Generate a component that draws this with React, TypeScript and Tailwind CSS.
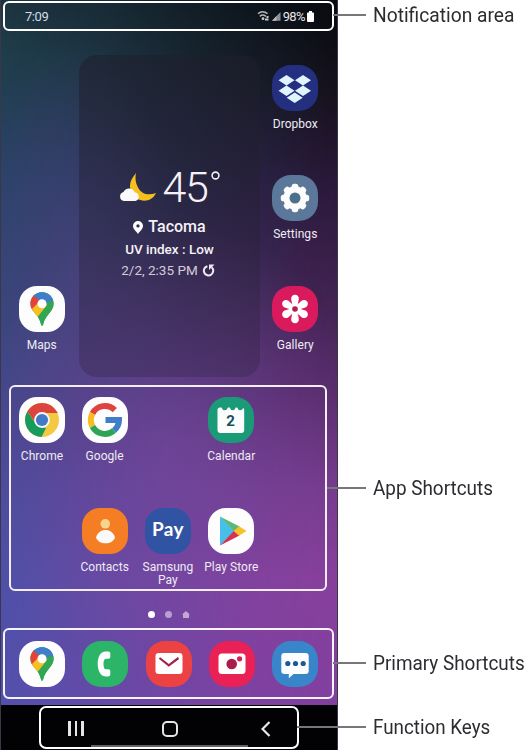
import React from "react";

type Kids = { children?: React.ReactNode };

const MapsIcon = () => (
  <svg viewBox="0 0 46 46" className="size-full">
    <rect width="46" height="46" rx="18" fill="#fdfdfe" />
    <clipPath id="pin">
      <path d="M23 6.3c-6.6 0-11.6 5-11.6 11.3 0 4 1.7 6.4 4.3 9.5 3 3.5 5.2 6.600 6.100 10.500.5 3 2 3 2.600 0 .9-3.900 3-7 6-10.600 2.600-3 4.200-5.600 4.200-9.500C34.600 11.300 29.600 6.300 23 6.300Z" />
    </clipPath>
    <g clipPath="url(#pin)">
      <rect width="46" height="46" fill="#31a653" />
      <path d="M8 3h30L23 18 14 10Z" fill="#4285cc" />
      <path d="M30 3 38 14 33 15 23 18 14 10 17 3Z" fill="#3f7fc8" />
      <path d="M14 9 23 17 12 27 6 18Z" fill="#e5423b" />
      <path d="M11.500 24.500 23 13 28 19 17 33Z" fill="#f8bf22" />
      <path d="M27 22 17 33 22 42 40 24V12l-5 2Z" fill="#31a653" />
    </g>
    <circle cx="23" cy="17.800" r="4.500" fill="#fff" />
  </svg>
);

const DropboxIcon = () => (
  <svg viewBox="0 0 46 46" className="size-full">
    <rect width="46" height="46" rx="19" fill="#24307f" />
    <path
      d="M14.500 10l8 5.200-8 5.200-8-5.200zM31 10l8 5.200-8 5.200-8-5.200zM14.500 20.500l8 5.200-8 5.200-8-5.200zM31 20.500l8 5.200-8 5.200-8-5.200zM22.700 27.600l8 5.200-8 5.200-8-5.200z"
      fill="#dff5fb"
    />
  </svg>
);

const SettingsIcon = () => (
  <svg viewBox="0 0 46 46" className="size-full">
    <rect width="46" height="46" rx="19" fill="#5b7799" />
    <g fill="#fcfcfd">
      {[0, 45, 90, 135].map((a) => (
        <rect key={a} x="19.700" y="8.800" width="6.600" height="28.400" rx="2.600" transform={`rotate(${a} 23 23)`} />
      ))}
      <circle cx="23" cy="23" r="11.700" />
    </g>
    <circle cx="23" cy="23" r="5.500" fill="#4b7089" />
  </svg>
);

const GalleryIcon = () => (
  <svg viewBox="0 0 46 46" className="size-full">
    <rect width="46" height="46" rx="19" fill="#d91b5e" />
    <g fill="#fff">
      {[0, 60, 120, 180, 240, 300].map((a) => (
        <path key={a} d="M20.700 20.500 19.200 13.200a3.850 3.850 0 1 1 7.600 0L25.300 20.500Z" transform={`rotate(${a} 23 23)`} />
      ))}
      <circle cx="23" cy="23" r="5" />
    </g>
    <circle cx="23" cy="23" r="2.800" fill="#b81a52" />
  </svg>
);

const ChromeIcon = () => (
  <svg viewBox="0 0 46 46" className="size-full">
    <rect width="46" height="46" rx="18" fill="#fdfdfe" />
    <circle cx="23" cy="23" r="17" fill="#f4c942" />
    <path d="M8.300 14.500A17 17 0 0 1 37.700 14.500L39 16H23l-6 10.500Z" fill="#dc453d" />
    <path d="M8.300 14.500 17 27l6 3.500 4 .500L22.500 40A17 17 0 0 1 8.300 14.500Z" fill="#169b5c" />
    <circle cx="23" cy="23" r="7.900" fill="#f6f8fc" />
    <circle cx="23" cy="23" r="6.100" fill="#427ac8" />
  </svg>
);

const GoogleIcon = () => (
  <svg viewBox="0 0 46 46" className="size-full">
    <rect width="46" height="46" rx="18" fill="#fdfdfe" />
    <g fill="none" strokeWidth="6">
      <path d="M10.500 16.500A14 14 0 0 1 32.800 13.100" stroke="#df433e" />
      <path d="M10.500 16.500a14 14 0 0 0 0 13" stroke="#f9bd20" />
      <path d="M10.500 29.500a14 14 0 0 0 21.500 4" stroke="#2fa456" />
      <path d="M32 33.500A14 14 0 0 0 37 23H23.500" stroke="#427dc7" />
    </g>
  </svg>
);

const CalendarIcon = () => (
  <svg viewBox="0 0 46 46" className="size-full">
    <rect width="46" height="46" rx="19" fill="#1a9a77" />
    <path
      d="M9.500 13q0-2.500 2.500-2.500h1.500q1 2.800 3.200 2.800t3.200-2.800h1.800q1 2.800 3 2.800t3-2.800h1.500q1 2.800 3 2.800t3-2.300q1 .500 1 2v20q0 3-3 3H12.500q-3 0-3-3Z"
      fill="#fbfdfd"
    />
    <text x="22.500" y="29" textAnchor="middle" fill="#15505f" fontSize="15" fontWeight="700" fontFamily="Roboto, sans-serif">
      2
    </text>
  </svg>
);

const ContactsIcon = () => (
  <svg viewBox="0 0 46 46" className="size-full">
    <rect width="46" height="46" rx="18" fill="#f57e25" />
    <circle cx="23.300" cy="15.800" r="4.800" fill="#f7d68b" />
    <path d="M14 29.500c1.500-5 5-7.500 9.500-7.500s8 2.500 9.500 7.500c-1.500 4-5 5.800-9.500 5.800s-8-1.800-9.500-5.800Z" fill="#fafafa" />
  </svg>
);

const PayIcon = () => (
  <div className="flex size-full items-center justify-center rounded-[18px] bg-[#3153a4] pb-0.5 font-['Lato',sans-serif] text-[19px] font-bold tracking-[0.3px] text-white">
    <span>Pay</span>
  </div>
);

const PlayIcon = () => (
  <svg viewBox="0 0 46 46" className="size-full">
    <rect width="46" height="46" rx="18" fill="#fdfdfe" />
    <path d="M12 8.500 26.500 23 12 37.500Z" fill="#48bfe9" />
    <path d="M12 8.500 31.500 18.500 26 23.200Z" fill="#59b977" />
    <path d="M12 37.500 31.500 27.500 26 22.800Z" fill="#d43450" />
    <path d="M31 18.200 38.500 23 31 27.800 25.800 23Z" fill="#f7c128" />
  </svg>
);

const PhoneIcon = () => (
  <svg viewBox="0 0 46 46" className="size-full">
    <rect width="46" height="46" rx="19" fill="#2cb468" />
    <path
      d="M26.500 10.500h-3c-5 0-7.800 5.200-7.800 12.300s3 12.600 7.800 12.600h3q1.800 0 1.800-1.800v-3.600q0-1.800-1.800-1.800H24c-1.800 0-2.500-2.300-2.500-5.300s.700-5.100 2.500-5.100h2.500q1.800 0 1.800-1.800v-3.700q0-1.800-1.800-1.800Z"
      fill="#fcfdfd"
    />
  </svg>
);

const MailIcon = () => (
  <svg viewBox="0 0 46 46" className="size-full">
    <rect width="46" height="46" rx="19" fill="#ed4244" />
    <rect x="9.500" y="12" width="27" height="21" rx="3.200" fill="#fff" />
    <path d="m13.500 17 9.300 7.300L32.500 17" fill="none" stroke="#a52050" strokeWidth="2.200" />
  </svg>
);

const CameraIcon = () => (
  <svg viewBox="0 0 46 46" className="size-full">
    <rect width="46" height="46" rx="19" fill="#e92155" />
    <rect x="9.500" y="12.500" width="27" height="20.500" rx="3.500" fill="#fff" />
    <circle cx="22.700" cy="23" r="5.300" fill="#a91d4e" />
    <circle cx="30.600" cy="17.800" r="2.600" fill="#d91f54" />
  </svg>
);

const MessagesIcon = () => (
  <svg viewBox="0 0 46 46" className="size-full">
    <rect width="46" height="46" rx="19" fill="#3886c9" />
    <path d="M12.500 12h21q3.200 0 3.200 3.200v14.500q0 3.200-3.200 3.200h-12l-4.700 4.300V32.900h-4.300q-3.200 0-3.200-3.200V15.200q0-3.200 3.200-3.200Z" fill="#fbfdff" />
    <g fill="#1e5794">
      <circle cx="15.800" cy="22.500" r="2.600" />
      <circle cx="23.500" cy="22.500" r="2.600" />
      <circle cx="31.200" cy="22.500" r="2.600" />
    </g>
  </svg>
);

function Shortcut({ label, children, place = "" }: Kids & { label?: string; place?: string }) {
  return (
    <div className={`flex flex-col items-center ${place}`}>
      <div className="size-[46px] shrink-0">{children}</div>
      {label && (
        <span className="mt-[7px] w-[70px] text-center text-[12px] leading-[13.500px] tracking-[0.05px] text-[#eeebf3]">{label}</span>
      )}
    </div>
  );
}

function StatusBar() {
  return (
    <div className="ml-[2px] mt-px flex h-[30px] w-[331px] items-center justify-between rounded-[6px] border-2 border-white pl-[20px] pr-[18px]">
      <span className="text-[13px] leading-none tracking-[-0.45px] text-[#d3dce3]">7:09</span>
      <div className="flex items-center text-[#e5e5e7]">
        <svg viewBox="0 0 25 12" className="h-[12px] w-[25px]">
          <g fill="none" stroke="#b9b9bc" strokeWidth="1.500">
            <path d="M1 3.700Q5.500-.200 10.500 3.700M2.800 6.300q3-2.500 6 0" />
          </g>
          <circle cx="6" cy="8.700" r="1.400" fill="#c9c9cc" />
          <path d="M8 9.500h3.500M9.500 7h2" stroke="#c9c9cc" strokeWidth="1.800" />
          <path d="M15 10.800 23.500 2v8.800Z" fill="#8f8f92" />
          <path d="M15 10.800 19.500 6v4.800Z" fill="#bbb" />
        </svg>
        <span className="ml-px text-[13px] leading-none tracking-[-0.600px]">98%</span>
        <svg viewBox="0 0 7 11" className="ml-[2px] h-[11px] w-[7px]">
          <path d="M2 0h3v1.500h1q1 0 1 1V10q0 1-1 1H1q-1 0-1-1V2.500q0-1 1-1h1Z" fill="#fff" />
        </svg>
      </div>
    </div>
  );
}

function Weather() {
  return (
    <div className="col-span-3 col-start-2 row-span-3 row-start-1 mb-[8px] ml-[6px] mr-[4px] flex flex-col items-center rounded-[18px] bg-[linear-gradient(to_bottom,rgba(31,29,43,.55),rgba(38,30,50,.4)_50%,rgba(54,38,74,.38))] pt-[112px] text-[#f5f2f7]">
      <div className="flex h-[40px] items-center">
        <svg viewBox="0 0 38 29" className="h-[29px] w-[38px]">
          <path d="M17 0C12 6 9 12 12.500 18.500 17 30 32 31 37 20c-7 2.500-14 2-18-5.500C16.500 9.500 16 5 17 0Z" fill="#f7bf1e" />
          <path d="M5 28a4.600 4.600 0 0 1-.500-9A6.200 6.200 0 0 1 15.800 19.200 4.500 4.500 0 0 1 16.500 28Z" fill="#fafafc" />
        </svg>
        <span className="ml-[5px] text-[43px] font-light leading-none tracking-[-1.300px]">45</span>
        <svg viewBox="0 0 9 9" className="mb-[23px] ml-[3px] size-[9px]">
          <circle cx="4.500" cy="4.500" r="3.400" fill="none" stroke="#f0edf3" strokeWidth="1.600" />
        </svg>
      </div>
      <div className="mt-[9px] flex h-[22px] items-center gap-[5px]">
        <svg viewBox="0 0 10 13" className="h-[13px] w-[10px]">
          <path fillRule="evenodd" d="M5 0a5 5 0 0 0-5 5c0 3 3.500 5.500 5 8 1.500-2.500 5-5 5-8a5 5 0 0 0-5-5Zm0 3.200a1.700 1.700 0 1 1 0 3.400 1.700 1.700 0 0 1 0-3.400Z" fill="#fff" />
        </svg>
        <span className="text-[16px] font-medium leading-none">Tacoma</span>
      </div>
      <p className="text-[13.500px] font-medium leading-[22px]">UV index : Low</p>
      <div className="flex h-[21px] items-center gap-[4px] pr-[3px]">
        <span className="text-[13.500px] leading-none text-[#d5cbd8]">2/2, 2:35 PM</span>
        <svg viewBox="0 0 13 13" className="size-[13px]">
          <path d="M9.600 3.200A4.700 4.700 0 1 1 5.400 2.200" fill="none" stroke="#eee8f0" strokeWidth="2" />
          <path d="M7 .500h5.500L7 6Z" fill="#eee8f0" />
        </svg>
      </div>
    </div>
  );
}

function Callout({ text, gap, line, pull, scale }: { text: string; gap: string; line: string; pull: string; scale: string }) {
  return (
    <div className={`flex h-[24px] items-center whitespace-nowrap ${gap} ${pull}`}>
      <span className={`h-[2px] shrink-0 bg-[#77767b] ${line}`} />
      <span className={`ml-[7px] inline-block origin-left text-[20px] leading-none text-[#2d2c31] ${scale}`}>{text}</span>
    </div>
  );
}

export default function App() {
  return (
    <main className="flex h-[750px] w-[525px] overflow-hidden bg-white font-['Roboto',sans-serif]">
      <section className="relative isolate flex h-[750px] w-[338px] shrink-0 flex-col border-x border-[#3b3748] bg-[linear-gradient(to_bottom,#050509_0%,#150e19_12%,#2b1638_25%,#43214f_40%,#5a2b6a_53%,#783a8c_65%,#8a3f9c_77%,#8240a0_94%)]">
        <div className="absolute inset-0 -z-10 bg-[linear-gradient(to_bottom,#1d3440_0%,#203f4e_8%,#28466a_24%,#344b80_42%,#404c96_57%,#4353a8_75%,#4854b0_94%)] [mask-image:linear-gradient(98deg,black_0%,rgba(0,0,0,.78)_25%,rgba(0,0,0,.4)_52%,rgba(0,0,0,.08)_78%,transparent_100%)]" />
        <div className="absolute inset-0 -z-10 bg-[radial-gradient(ellipse_200px_230px_at_50%_60%,rgba(124,72,162,.55),transparent),radial-gradient(ellipse_110px_230px_at_22%_36%,rgba(78,66,128,.6),transparent)]" />
        <StatusBar />
        <div className="ml-[9px] mt-[24px] grid h-[330px] w-[317px] grid-cols-5 grid-rows-3">
          <Weather />
          <Shortcut label="Dropbox" place="col-start-5 row-start-1 pt-[10px]"><DropboxIcon /></Shortcut>
          <Shortcut label="Settings" place="col-start-5 row-start-2 pt-[10px]"><SettingsIcon /></Shortcut>
          <Shortcut label="Maps" place="col-start-1 row-start-3 pt-[11px]"><MapsIcon /></Shortcut>
          <Shortcut label="Gallery" place="col-start-5 row-start-3 pt-[11px]"><GalleryIcon /></Shortcut>
        </div>
        <div className="ml-[8px] grid h-[206px] w-[318px] grid-cols-[62px_repeat(4,63.300px)] grid-rows-[110.500px_1fr] rounded-[6px] border-2 border-[#f3edf7] pt-[10px]">
          <Shortcut label="Chrome" place="col-start-1 row-start-1"><ChromeIcon /></Shortcut>
          <Shortcut label="Google" place="col-start-2 row-start-1"><GoogleIcon /></Shortcut>
          <Shortcut label="Calendar" place="col-start-4 row-start-1"><CalendarIcon /></Shortcut>
          <Shortcut label="Contacts" place="col-start-2 row-start-2"><ContactsIcon /></Shortcut>
          <Shortcut label="Samsung Pay" place="col-start-3 row-start-2"><PayIcon /></Shortcut>
          <Shortcut label="Play Store" place="col-start-4 row-start-2"><PlayIcon /></Shortcut>
        </div>
        <div className="ml-[147px] flex h-[37px] items-center gap-[10px] pt-[9px]">
          <span className="size-[7px] rounded-full bg-white" />
          <span className="size-[7px] rounded-full bg-[#b7a0d3]" />
          <svg viewBox="0 0 8 7" className="h-[7px] w-[8px]"><path d="M4 0 8 3.500H7V7H1V3.500H0Z" fill="#c5a5d6" /></svg>
        </div>
        <div className="ml-[2px] flex h-[71px] w-[331px] items-center justify-between rounded-[6px] border-2 border-[#f6f3fa] px-[14px]">
          {[MapsIcon, PhoneIcon, MailIcon, CameraIcon, MessagesIcon].map((Icon, i) => (
            <Shortcut key={i}><Icon /></Shortcut>
          ))}
        </div>
        <div className="mt-[6px] flex h-[45px] bg-[#020204] pl-[38px] pt-px">
          <div className="flex h-[43px] w-[260px] flex-col rounded-[7px] border-2 border-white">
            <div className="flex h-[38px] shrink-0 items-center justify-between pl-[27px] pr-[26px] pt-[3px]">
              <div className="flex gap-[4px]">
                <span className="h-[15px] w-[2.500px] bg-[#e5e5e7]" />
                <span className="h-[15px] w-[2.500px] bg-[#e5e5e7]" />
                <span className="h-[15px] w-[2.500px] bg-[#e5e5e7]" />
              </div>
              <span className="-ml-[4px] h-[16px] w-[16px] rounded-[5px] border-2 border-[#e5e5e7]" />
              <svg viewBox="0 0 10 16" className="h-[16px] w-[10px]"><path d="M8.500 1 1.500 8l7 7" fill="none" stroke="#e9e9eb" strokeWidth="2.200" /></svg>
            </div>
            <span className="-mt-px ml-[50px] h-[2px] w-[157px] bg-[#626266]" />
          </div>
        </div>
      </section>
      <aside className="relative flex flex-col">
        <Callout text="Notification area" gap="mt-[3px]" pull="-ml-[5px]" line="w-[33px]" scale="scale-x-[.96]" />
        <Callout text="App Shortcuts" gap="mt-[449px]" pull="-ml-[11px]" line="w-[39px]" scale="scale-x-[.945]" />
        <Callout text="Primary Shortcuts" gap="mt-[151px]" pull="-ml-[5px]" line="w-[33px]" scale="scale-x-[.945]" />
        <Callout text="Function Keys" gap="mt-[40px]" pull="-ml-[41px]" line="w-[69px]" scale="scale-x-[.94]" />
      </aside>
    </main>
  );
}
